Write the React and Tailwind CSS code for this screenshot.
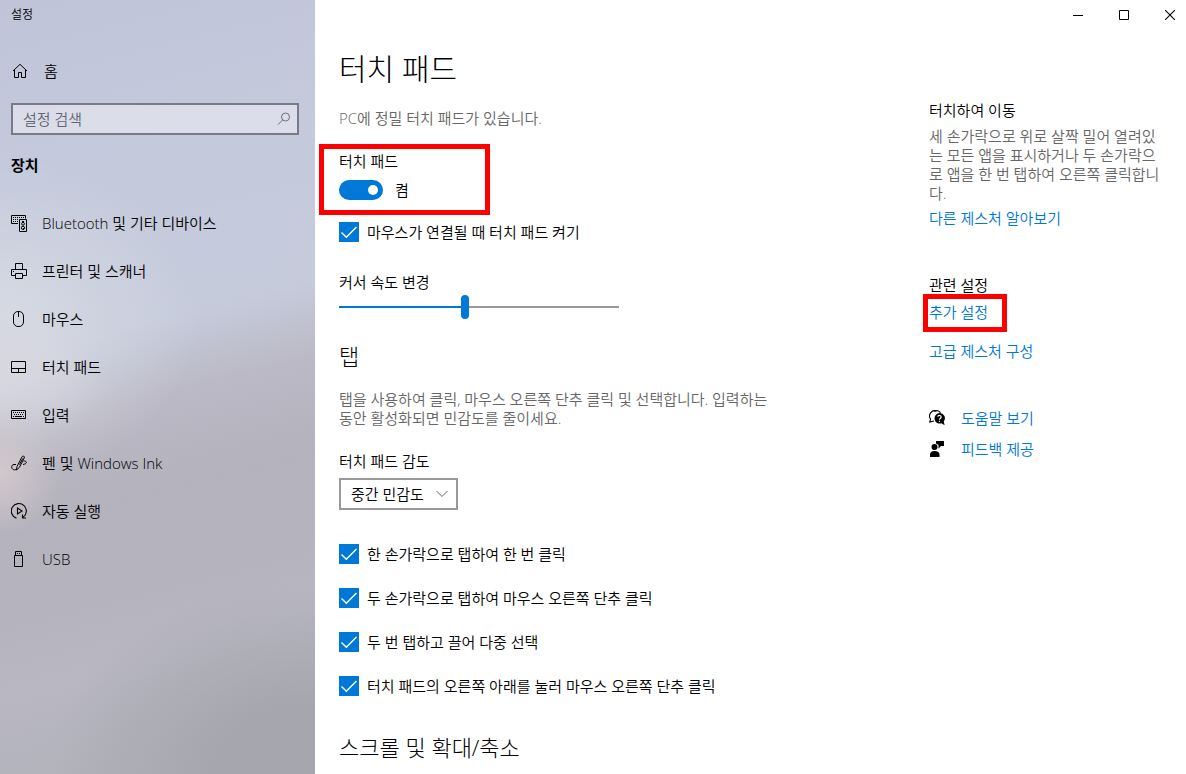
import React, { useState } from "react";

const HomeIcon = () => (
  <svg width="16" height="16" viewBox="0 0 16 16" fill="none" stroke="black" strokeWidth="1">
    <path d="M1 8 L8 1.3 L15 8 M2.5 6.8 V14.5 H6.5 V9.5 H9.5 V14.5 H13.5 V6.8" />
  </svg>
);

const DevicesIcon = () => (
  <svg width="17" height="17" viewBox="0 0 17 17" fill="none" stroke="black" strokeWidth="1">
    <path d="M7 8.5 H0.5 V0.5 H14.5 V3.5" />
    <path d="M2 2.5 H14 M2 4.5 H8 M2 6.5 H7" strokeDasharray="1 1" />
    <path d="M8.5 4.5 H15.5 V16.5 H8.5 Z" />
    <path d="M11 6.5 H13 M12.5 13 V15" />
    <circle cx="12" cy="8.8" r="1.4" />
    <circle cx="12" cy="12.8" r="1.6" />
  </svg>
);

const PrinterIcon = () => (
  <svg width="16" height="16" viewBox="0 0 16 16" fill="none" stroke="black" strokeWidth="1">
    <path d="M4.5 6.5 V0.5 H11.5 V6.5" />
    <path d="M4.5 12.5 H0.5 V6.5 H15.5 V12.5 H11.5" />
    <path d="M4.5 10.5 H11.5 V15.5 H4.5 Z" />
    <path d="M2 8.5 H3" />
  </svg>
);

const MouseIcon = () => (
  <svg width="16" height="16" viewBox="0 0 16 16" fill="none" stroke="black" strokeWidth="1">
    <rect x="2.5" y="0.5" width="10" height="15" rx="4.5" />
    <path d="M7.5 1 V6" />
  </svg>
);

const TouchpadIcon = () => (
  <svg width="16" height="16" viewBox="0 0 16 16" fill="none" stroke="black" strokeWidth="1">
    <path d="M0.5 2.5 H14.5 V13.5 H0.5 Z M0.5 9.5 H14.5 M7.5 9.5 V13.5" />
  </svg>
);

const KeyboardIcon = () => (
  <svg width="16" height="16" viewBox="0 0 16 16" fill="none" stroke="black" strokeWidth="1">
    <path d="M0.5 3.5 H14.5 V11.5 H0.5 Z" />
    <path d="M2 5.5 H14 M3 7.5 H13" strokeDasharray="1 1" />
    <path d="M2 9.5 H3 M4 9.5 H11 M12 9.5 H13" />
  </svg>
);

const PenIcon = () => (
  <svg width="16" height="16" viewBox="0 0 16 16" fill="none" stroke="black" strokeWidth="1">
    <path d="M5.5 15 L6 11.5 L11 1.8 C11.8 0.4 14 1 13.2 3 L8.3 12.5 Z" />
    <path d="M11.8 3.5 L8.5 9.5" />
    <path d="M5 9.5 H3 C0 9.8 0 13.8 2.5 14.6 C4 15 5 14.8 5.5 14" />
    <path d="M12.5 6.2 C15 5.5 16.5 7.5 14.5 8.7 L12 9.5" />
  </svg>
);

const AutoPlayIcon = () => (
  <svg width="16" height="16" viewBox="0 0 16 16" fill="none" stroke="black" strokeWidth="1.1">
    <path d="M5.5 15.2 A7.5 7.5 0 1 1 12 14.3" />
    <path d="M6.5 5 V11 L11 8 Z" />
    <path d="M11.5 11.5 V15 H15" />
  </svg>
);

const UsbIcon = () => (
  <svg width="16" height="16" viewBox="0 0 16 16" fill="none" stroke="black" strokeWidth="1">
    <path d="M3.5 4.5 H11.5 V15.5 H3.5 Z M4.5 4.5 V0.5 H10.5 V4.5" />
    <path d="M6 2.5 H7 M8 2.5 H9" />
  </svg>
);

const SearchIcon = () => (
  <svg width="14" height="14" viewBox="0 0 14 14" fill="none" stroke="#6b6e7b" strokeWidth="1">
    <circle cx="8.5" cy="5" r="4" />
    <path d="M5.7 7.9 L1 12.6" />
  </svg>
);

const HelpIcon = () => (
  <svg width="16" height="16" viewBox="0 0 16 16">
    <path
      d="M7.5 1 A5.2 5.2 0 0 0 1.6 9 L0.8 12 L5 11"
      fill="none"
      stroke="black"
      strokeWidth="1.1"
    />
    <path d="M5 1.2 C7 0 10.5 0.8 11.5 3" fill="none" stroke="black" strokeWidth="1.1" />
    <path d="M10.3 3 A5.3 5.3 0 1 0 12.5 13.3 L15.6 15.3 L14.8 11.5 A5.3 5.3 0 0 0 10.3 3 Z" fill="black" />
    <path d="M8.8 6.8 C9 5 12.2 5 12.2 7 C12.2 8.3 10.5 8.2 10.5 9.8" fill="none" stroke="white" strokeWidth="1.2" />
    <path d="M9.9 10.7 H11.1 V11.9 H9.9 Z" fill="white" />
  </svg>
);

const FeedbackIcon = () => (
  <svg width="16" height="16" viewBox="0 0 16 16" fill="black">
    <circle cx="5.5" cy="6" r="3" />
    <path d="M1 16 V13.5 C1 11 3 10 5.5 10 C8 10 10.5 11 10.5 13.5 V16 Z" />
    <path d="M7 0 H15 V5 H12 L9.5 7.5 V4 L7 2.5 Z" />
  </svg>
);

const navItems = [
  { label: "Bluetooth 및 기타 디바이스", Icon: DevicesIcon },
  { label: "프린터 및 스캐너", Icon: PrinterIcon },
  { label: "마우스", Icon: MouseIcon },
  { label: "터치 패드", Icon: TouchpadIcon },
  { label: "입력", Icon: KeyboardIcon },
  { label: "펜 및 Windows Ink", Icon: PenIcon },
  { label: "자동 실행", Icon: AutoPlayIcon },
  { label: "USB", Icon: UsbIcon },
];

const tapOptions = [
  "한 손가락으로 탭하여 한 번 클릭",
  "두 손가락으로 탭하여 마우스 오른쪽 단추 클릭",
  "두 번 탭하고 끌어 다중 선택",
  "터치 패드의 오른쪽 아래를 눌러 마우스 오른쪽 단추 클릭",
];

const CheckOption = ({ label }) => (
  <label className="flex items-center gap-2">
    <span className="grid h-5 w-5 shrink-0">
      <input
        type="checkbox"
        defaultChecked
        className="peer col-start-1 row-start-1 h-5 w-5 appearance-none border-2 border-[#333333] bg-white checked:border-0 checked:bg-[#0078d7]"
      />
      <svg
        viewBox="0 0 20 20"
        fill="none"
        stroke="white"
        strokeWidth="1.4"
        className="pointer-events-none invisible col-start-1 row-start-1 h-5 w-5 peer-checked:visible"
      >
        <path d="M2.5 10.5 L7.3 15.2 L17.5 5" />
      </svg>
    </span>
    {label}
  </label>
);

const Sidebar = () => (
  <div className="w-[315px] shrink-0 bg-[radial-gradient(ellipse_60px_65px_at_0%_61%,#d2c8cb_0%,#d2c8cb00_100%),radial-gradient(ellipse_110px_75px_at_0%_48%,#d8d7e0_0%,#d8d7e000_100%),radial-gradient(ellipse_200px_160px_at_0%_41%,#d6dae3_0%,#d6dae300_100%),radial-gradient(ellipse_270px_190px_at_100%_100%,#a5a6ae_35%,#a5a6ae00_100%),linear-gradient(166deg,#bfc4d8_0%,#c4c9dc_22%,#c6cbdc_42%,#bbb9c5_51%,#b4b2bd_62%,#b4b3be_72%,#b8b7c2_82%,#b0b1b9_100%)] px-[11px]">
    <div className="flex h-[30px] items-center text-xs">설정</div>
    <a href="#home" className="mt-[17px] flex h-12 items-center gap-4 pl-px">
      <HomeIcon />
      홈
    </a>
    <div className="mt-2 mr-[5px] flex h-8 items-center border-2 border-[#777a87] bg-white/40 pr-[6px] pl-[10px]">
      <input
        type="search"
        aria-label="설정 검색"
        placeholder="설정 검색"
        className="min-w-0 flex-1 bg-transparent outline-none placeholder:text-[#626573]"
      />
      <SearchIcon />
    </div>
    <h2 className="mt-5 font-bold">장치</h2>
    <nav className="mt-6">
      {navItems.map(({ label, Icon }) => (
        <a key={label} href="#settings" className="flex h-12 items-center">
          <span className="w-[31px] shrink-0">
            <Icon />
          </span>
          {label}
        </a>
      ))}
    </nav>
  </div>
);

const WindowButtons = () => (
  <div className="flex h-[30px] justify-end gap-[14px]">
    <button type="button" aria-label="최소화" className="flex w-8 items-center justify-center">
      <svg width="10" height="10" viewBox="0 0 10 10" stroke="black">
        <path d="M0 5.5 H10" />
      </svg>
    </button>
    <button type="button" aria-label="최대화" className="flex w-8 items-center justify-center">
      <svg width="10" height="10" viewBox="0 0 10 10" fill="none" stroke="black">
        <path d="M0.5 0.5 H9.5 V9.5 H0.5 Z" />
      </svg>
    </button>
    <button type="button" aria-label="닫기" className="flex w-8 items-center justify-center">
      <svg width="10" height="10" viewBox="0 0 10 10" stroke="black" strokeWidth="1.1">
        <path d="M0 0 L10 10 M10 0 L0 10" />
      </svg>
    </button>
  </div>
);

const TouchpadSettings = () => {
  const [enabled, setEnabled] = useState(true);
  const [speed, setSpeed] = useState(45);

  return (
    <main className="min-w-0 flex-1 pt-[19px] pb-3">
      <h1 className="text-[30px] leading-10 font-light">터치 패드</h1>
      <p className="mt-[19px] text-[#666666]">PC에 정밀 터치 패드가 있습니다.</p>

      <div className="relative mt-[23px]">
        <label htmlFor="touchpad" className="block">
          터치 패드
        </label>
        <div className="mt-[9px] flex h-5 items-center gap-3">
          <input
            id="touchpad"
            type="checkbox"
            role="switch"
            checked={enabled}
            onChange={(e) => setEnabled(e.target.checked)}
            className="flex h-5 w-11 appearance-none items-center rounded-full bg-[#999999] px-[5px] before:h-[10px] before:w-[10px] before:rounded-full before:bg-white checked:justify-end checked:bg-[#0078d7]"
          />
          {enabled ? "켬" : "끔"}
        </div>
        <div className="pointer-events-none absolute -top-[7px] -left-5 h-[71px] w-[171px] border-5 border-[#ff0000]" />
      </div>

      <div className="mt-[22px]">
        <CheckOption label="마우스가 연결될 때 터치 패드 켜기" />
      </div>

      <label htmlFor="speed" className="mt-[30px] block">
        커서 속도 변경
      </label>
      <input
        id="speed"
        type="range"
        value={speed}
        onChange={(e) => setSpeed(Number(e.target.value))}
        style={{ "--fill": `${speed}%` }}
        className="mt-[3px] block h-6 w-[280px] appearance-none bg-transparent [&::-webkit-slider-runnable-track]:h-[2px] [&::-webkit-slider-runnable-track]:bg-[linear-gradient(to_right,#0078d7_var(--fill),#999999_var(--fill))] [&::-webkit-slider-thumb]:-mt-[11px] [&::-webkit-slider-thumb]:h-6 [&::-webkit-slider-thumb]:w-2 [&::-webkit-slider-thumb]:appearance-none [&::-webkit-slider-thumb]:rounded-full [&::-webkit-slider-thumb]:bg-[#0078d7]"
      />

      <h2 className="mt-[23px] text-[22px] leading-7 font-light">탭</h2>
      <p className="mt-5 max-w-[440px] leading-[19px] text-[#666666]">
        탭을 사용하여 클릭, 마우스 오른쪽 단추 클릭 및 선택합니다. 입력하는 동안 활성화되면 민감도를 줄이세요.
      </p>

      <label htmlFor="sensitivity" className="mt-[23px] block">
        터치 패드 감도
      </label>
      <div className="mt-[7px] grid w-[119px] items-center">
        <select
          id="sensitivity"
          className="col-start-1 row-start-1 h-8 appearance-none border-2 border-[#999999] bg-white pl-[10px]"
        >
          <option>중간 민감도</option>
        </select>
        <svg
          width="12"
          height="8"
          viewBox="0 0 12 8"
          fill="none"
          stroke="#666666"
          className="pointer-events-none col-start-1 row-start-1 mr-[10px] justify-self-end"
        >
          <path d="M0.5 1 L6 6.5 L11.5 1" />
        </svg>
      </div>

      <div className="mt-[34px] flex flex-col gap-6">
        {tapOptions.map((option) => (
          <CheckOption key={option} label={option} />
        ))}
      </div>

      <h2 className="mt-[37px] text-[22px] leading-7 font-light">스크롤 및 확대/축소</h2>
    </main>
  );
};

const RelatedLinks = () => (
  <aside className="w-[236px] shrink-0 pt-[70px]">
    <h3>터치하여 이동</h3>
    <p className="mt-[7px] leading-[19px] text-[#666666]">
      세 손가락으로 위로 살짝 밀어 열려있는 모든 앱을 표시하거나 두 손가락으로 앱을 한 번 탭하여 오른쪽 클릭합니다.
    </p>
    <a href="#gestures" className="mt-[5px] block text-[#0078d7]">
      다른 제스처 알아보기
    </a>

    <h3 className="mt-[47px]">관련 설정</h3>
    <div className="relative mt-[7px]">
      <a href="#additional" className="block text-[#0078d7]">
        추가 설정
      </a>
      <div className="pointer-events-none absolute -top-2 -left-[6px] h-[38px] w-[84px] border-5 border-[#ff0000]" />
    </div>
    <a href="#advanced" className="mt-[19px] block text-[#0078d7]">
      고급 제스처 구성
    </a>

    <a href="#help" className="mt-[47px] flex items-center gap-4 text-[#0078d7]">
      <HelpIcon />
      도움말 보기
    </a>
    <a href="#feedback" className="mt-[11px] flex items-center gap-4 text-[#0078d7]">
      <FeedbackIcon />
      피드백 제공
    </a>
  </aside>
);

const App = () => {
  return (
    <div className="flex min-h-screen bg-white font-['Open_Sans','Noto_Sans_CJK_KR',sans-serif] text-[15px] leading-5 font-[350] text-black">
      <Sidebar />
      <div className="min-w-0 flex-1">
        <WindowButtons />
        <div className="flex justify-between gap-6 pr-[21px] pl-6">
          <TouchpadSettings />
          <RelatedLinks />
        </div>
      </div>
    </div>
  );
};

export default App;
